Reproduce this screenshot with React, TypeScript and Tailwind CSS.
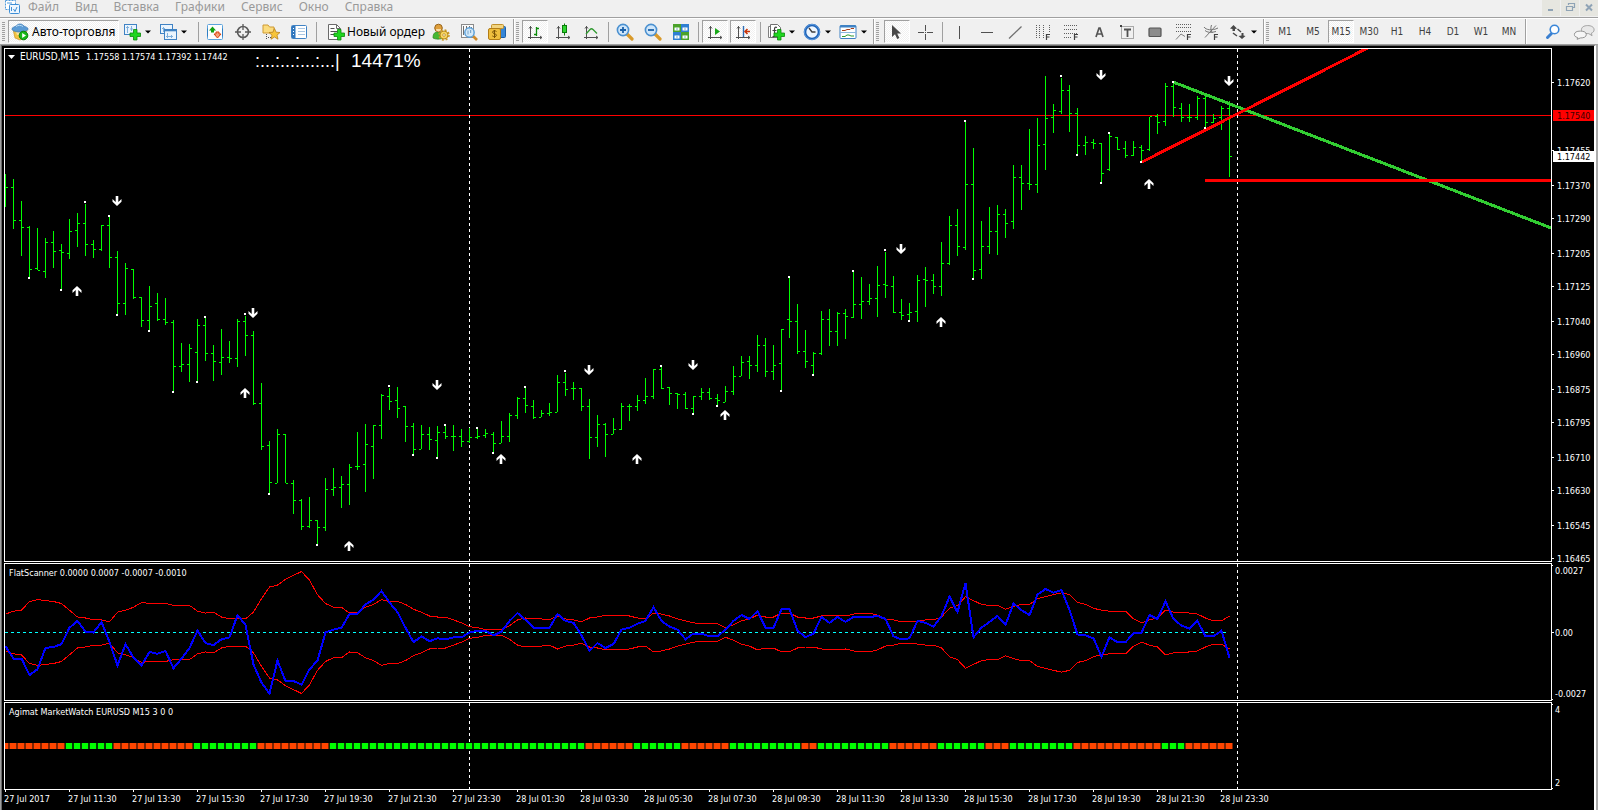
import React from "react";

/* ---------- Chart data ---------- */

const STEP = 8;

// high, low, open, close for each M15 bar, as rows measured from the window top
const BARS: number[][] = [
  [174,207,187,187],[179,229,187,220],[201,256,220,227],[226,278,227,269],[228,270,268,270],[238,278,271,242],
  [231,268,242,251],[244,289,250,252],[219,259,253,231],[213,247,230,223],[204,256,223,244],[240,258,244,249],
  [225,251,249,225],[215,268,225,257],[251,315,257,303],[263,315,303,268],[269,299,269,297],[297,327,297,320],
  [286,331,320,306],[293,321,303,319],[298,325,319,322],[320,391,322,366],[343,372,366,364],[344,382,364,348],
  [319,382,352,325],[317,361,325,353],[345,381,353,361],[329,375,362,357],[341,363,357,358],[319,367,358,321],
  [316,356,321,335],[331,405,335,403],[383,450,403,446],[441,494,445,482],[429,483,483,434],[434,483,434,483],
  [480,514,483,500],[499,530,500,526],[497,528,526,520],[520,545,520,527],[478,531,527,489],[468,496,489,487],
  [476,508,487,484],[464,505,484,467],[432,470,466,466],[424,492,464,444],[425,479,446,425],[394,439,425,395],
  [388,410,396,401],[387,418,400,408],[406,442,406,426],[423,455,426,449],[425,449,449,434],[427,450,434,439],
  [426,458,440,432],[425,439,432,436],[425,451,436,436],[429,447,436,441],[428,443,441,437],[428,439,437,436],
  [429,438,435,433],[432,453,434,443],[421,443,443,436],[413,442,436,415],[397,419,415,398],[387,413,398,405],
  [400,419,406,417],[410,417,417,413],[403,416,413,412],[375,412,412,382],[373,396,382,389],[382,400,388,388],
  [388,411,388,406],[399,459,406,437],[415,447,437,424],[423,457,424,434],[418,434,434,429],[403,430,429,406],
  [404,421,406,406],[395,411,406,400],[378,404,400,396],[369,399,396,369],[367,389,369,388],[387,405,387,393],
  [393,409,393,394],[392,409,394,408],[396,414,408,396],[388,400,396,392],[388,400,392,398],[394,405,398,400],
  [386,402,402,391],[366,395,391,376],[356,376,376,362],[356,379,361,365],[335,372,365,345],[338,377,345,371],
  [345,380,371,365],[329,391,363,329],[277,338,319,321],[304,354,321,351],[330,368,351,361],[352,375,365,353],
  [311,355,353,319],[309,346,319,331],[312,346,331,313],[309,339,313,316],[271,318,317,304],[277,319,304,301],
  [284,305,301,298],[266,317,298,285],[252,298,284,285],[276,313,286,312],[299,320,312,315],[303,320,314,312],
  [275,322,311,280],[267,307,279,280],[274,294,280,286],[242,296,286,263],[216,265,263,225],[209,256,225,246],
  [121,250,247,184],[148,279,184,270],[221,279,269,246],[207,254,246,231],[205,255,231,214],[209,238,214,223],
  [165,229,221,177],[165,210,177,183],[129,190,183,184],[118,193,184,145],[76,170,144,118],[104,133,117,110],
  [78,114,111,90],[85,132,90,113],[108,155,113,145],[136,155,145,142],[139,149,142,143],[143,182,143,173],
  [133,171,169,136],[137,150,137,149],[141,158,148,155],[141,156,155,147],[145,162,147,150],[117,151,149,116],
  [114,134,116,122],[83,126,121,86],[83,117,86,107],[103,122,108,117],[104,122,117,117],[96,120,117,98],
  [96,128,98,122],[114,123,122,118],[106,130,117,108],[101,177,108,156],
];

// [bar, row] of each fractal dot
const FRACTALS: number[][] = [
  [3,278],[7,290],[10,202],[13,216],[14,315],[18,331],[21,392],[24,382],[25,317],[30,314],[33,494],[39,545],
  [48,386],[51,455],[54,458],[55,425],[59,428],[61,453],[65,387],[70,371],[82,366],[86,414],[89,406],[97,391],
  [98,277],[101,375],[106,271],[110,250],[113,321],[120,121],[121,279],[132,76],[134,155],[137,183],[138,133],
  [142,162],[146,82],[150,128],
];

const DOWN_ARROWS: number[][] = [
  [117,201],[253,313],[437,385],[589,370],[693,365],[901,249],[1101,75],[1229,81],
];
const UP_ARROWS: number[][] = [
  [77,291],[245,393],[349,546],[501,459],[637,459],[725,415],[941,322],[1149,184],
];

// FlatScanner envelope (mirrored around zero) and its main line
const ENVELOPE = [
  19,22,23,32,34,33,32,30,23,16,15,13,13,11,21,23,26,31,30,30,30,28,28,28,22,20,21,16,14,14,14,21,35,47,49,55,59,
  63,54,39,30,26,26,20,21,26,29,34,32,32,29,24,21,17,16,16,13,10,6,5,3,3,3,7,13,15,14,14,13,17,14,13,11,15,16,18,
  18,18,17,15,14,20,19,17,14,12,10,9,9,9,5,8,12,14,18,16,16,20,20,16,15,15,17,18,18,17,19,20,20,18,14,13,11,11,12,
  13,13,16,25,28,37,33,29,28,28,24,27,29,29,35,37,39,41,39,31,29,25,23,22,22,22,14,10,13,15,23,21,21,20,19,15,12,
  12,17,
];
const OSCILLATOR = [
  -14,-27,-27,-44,-38,-16,-15,-12,5,12,1,0,11,-10,-34,-12,-26,-34,-20,-22,-19,-37,-27,-16,2,-11,-13,-7,-5,18,8,
  -33,-52,-63,-29,-50,-50,-54,-38,-29,0,3,5,19,19,29,34,43,31,21,5,-10,-4,-9,-6,-7,-5,-5,0,2,2,-3,1,12,20,13,5,5,
  5,19,12,10,-3,-19,-11,-16,-12,3,5,9,12,26,12,6,3,-7,-1,-1,-4,-4,3,12,18,14,22,5,5,24,24,2,-5,-1,16,10,16,11,16,
  16,16,17,14,-4,-7,-6,12,10,6,17,37,21,51,-5,5,11,17,8,30,23,18,39,45,41,44,23,-2,-3,-6,-25,-5,-10,-10,-1,0,18,
  14,32,14,7,4,12,-4,-4,2,-26,
];
const OSC_SCALE = 0.968;
const ZERO = 68.5;

// run lengths of the MarketWatch strip, alternating from orange to green
const TREND_RUNS = [8, 6, 10, 8, 9, 32, 6, 6, 6, 9, 2, 9, 6, 6, 3, 8, 11, 3, 6];

const PRICES: [string, number][] = [
  ["1.17620",82],["1.17455",150],["1.17370",185],["1.17290",218],["1.17205",253],["1.17125",286],["1.17040",321],
  ["1.16960",354],["1.16875",389],["1.16795",422],["1.16710",457],["1.16630",490],["1.16545",525],["1.16465",558],
];

const TIMES = [
  "27 Jul 2017","27 Jul 11:30","27 Jul 13:30","27 Jul 15:30","27 Jul 17:30","27 Jul 19:30","27 Jul 21:30",
  "27 Jul 23:30","28 Jul 01:30","28 Jul 03:30","28 Jul 05:30","28 Jul 07:30","28 Jul 09:30","28 Jul 11:30",
  "28 Jul 13:30","28 Jul 15:30","28 Jul 17:30","28 Jul 19:30","28 Jul 21:30","28 Jul 23:30",
];

/* ---------- Toolbar parts ---------- */

function Icon({ children }: { children: React.ReactNode }) {
  return (
    <svg width="18" height="18" viewBox="0 0 18 18" fill="none" className="shrink-0" aria-hidden="true">
      {children}
    </svg>
  );
}

function Grip() {
  return <span className="mx-0.5 h-5 w-[3px] shrink-0 bg-[repeating-linear-gradient(#a0a0a0_0_1px,#f0f0f0_1px_2px)]" />;
}

function Separator() {
  return <span className="mr-0.5 ml-[3px] h-5 w-px shrink-0 self-center bg-[#a0a0a0]" />;
}

function Group({ children }: { children: React.ReactNode }) {
  return (
    <div className="flex h-full items-center border-r border-[#a0a0a0] pr-0.5 shadow-[1px_0_0_#fff]">{children}</div>
  );
}

const PRESSED =
  "border border-t-[#a0a0a0] border-l-[#a0a0a0] border-r-white border-b-white bg-[repeating-conic-gradient(#fff_0_25%,#f0f0f0_0_50%)] bg-[length:2px_2px]";

function Tool({ label, pressed, children }: { label: string; pressed?: boolean; children: React.ReactNode }) {
  return (
    <button
      type="button"
      aria-label={label}
      aria-pressed={pressed}
      className={
        "mx-px flex h-[23px] w-[26px] shrink-0 items-center justify-center font-['DejaVu_Sans_Condensed','DejaVu_Sans',sans-serif] text-[10px] text-[#404040] " +
        (pressed ? PRESSED : "")
      }
    >
      {children}
    </button>
  );
}

function DropTool({ label, children }: { label: string; children: React.ReactNode }) {
  return (
    <button type="button" aria-label={label} className="flex h-[23px] w-9 shrink-0 items-center gap-1 pl-1">
      {children}
      <svg width="6" height="4" viewBox="0 0 6 4" className="shrink-0" aria-hidden="true">
        <path d="M0 0.500h6L3 3.500z" fill="#000" />
      </svg>
    </button>
  );
}

const Plus = () => (
  <path d="M10.500 6.500h3.500v3.500h3.500v3.500h-3.500v3.500h-3.500v-3.500h-3.500v-3.500h3.500z" fill="#1fd61f" stroke="#0a8a0a" strokeWidth="0.800" />
);

const Axes = () => (
  <path d="M4.500 3v13M2 14.500h14M3 5.500l1.500-2 1.500 2M14 13l2 1.500-2 1.500" stroke="#505050" />
);

const Magnifier = ({ minus }: { minus?: boolean }) => (
  <Icon>
    <path d="M11 11l5 5" stroke="#d99a2b" strokeWidth="3.200" strokeLinecap="round" />
    <circle cx="7" cy="7" r="5.600" fill="#cfe6fa" stroke="#4a90d0" strokeWidth="1.600" />
    <path d={minus ? "M4 7h6" : "M4 7h6M7 4v6"} stroke="#1b62ab" strokeWidth="1.800" />
  </Icon>
);

const F = ({ x = 12, y = 17 }: { x?: number; y?: number }) => (
  <path d={`M${x + 0.5} ${y}v-5.500h3.500M${x} ${y - 3}h3.500`} stroke="#404040" strokeWidth="1.200" />
);

function Toolbar() {
  return (
    <div className="flex h-[27px] items-center border-t border-[#a0a0a0] bg-[#f0f0f0] pt-px shadow-[inset_0_1px_0_#fff]">
      <Group>
        <Grip />
        <button
          type="button"
          className={"ml-px flex h-[23px] w-[111px] shrink-0 items-center gap-[3px] whitespace-nowrap pl-0.5 text-[12px] text-black " + PRESSED}
        >
          <Icon>
            <path d="M2 6l7 3 7-3-1 7-6 4-5-2z" fill="#f4c542" stroke="#c8922a" strokeWidth="0.700" />
            <path d="M5 9h7v3H6z" fill="#f9e2a0" />
            <path d="M1 6c0-2 3-2 4-3s2-2 4-2 3 1 4 2 4 1 4 3-4 3-8 3-8-1-8-3z" fill="#5b9bd5" stroke="#3a78b5" strokeWidth="0.700" />
            <path d="M5 3.500c2-1.500 5-1.500 7 0" stroke="#bcdcf5" />
            <circle cx="12.500" cy="12.500" r="4.300" fill="#18b818" stroke="#0b7d0b" />
            <path d="M11.200 10v5l3.800-2.500z" fill="#fff" />
          </Icon>
          Авто-торговля
        </button>
        <DropTool label="Новый график">
          <Icon>
            <rect x="1.500" y="1.500" width="12" height="10" fill="#eaf4fd" stroke="#3f82c4" />
            <path d="M4.500 3v7M3 4.500h3M8.500 3v5M7 6h3" stroke="#7fb0dc" />
            <Plus />
          </Icon>
        </DropTool>
        <DropTool label="Профили">
          <Icon>
            <rect x="1.500" y="1.500" width="12" height="9" fill="#eaf4fd" stroke="#3f82c4" />
            <path d="M4.500 4v5M3 5.500h3" stroke="#7fb0dc" />
            <rect x="5.500" y="6.500" width="12" height="10" fill="#eaf4fd" stroke="#3f82c4" />
            <path d="M5 7.500h13" stroke="#3f82c4" strokeWidth="1.600" />
            <path d="M8.500 10v5M7 13.500h7M12.500 12v3" stroke="#7fb0dc" />
          </Icon>
        </DropTool>
        <span className="w-1" />
        <Separator />
        <Tool label="Обзор рынка">
          <Icon>
            <rect x="1.500" y="1.500" width="15" height="15" rx="1" fill="#fdfdfd" stroke="#5ba3dc" />
            <path d="M1.500 5.500v8M16.500 5.500v8" stroke="#2f7fc4" />
            <path d="M6.500 3.500L10 7.500H8v2H5v-2H3z" fill="#12a012" />
            <path d="M11.500 15L15 11h-2V9h-3v2H8z" fill="#f5a27a" stroke="#d8400c" />
          </Icon>
        </Tool>
        <Tool label="Окно данных">
          <Icon>
            <circle cx="9" cy="9" r="5.500" stroke="#5a5a5a" strokeWidth="1.600" />
            <path d="M9 1v6M9 11v6M1 9h6M11 9h6" stroke="#5a5a5a" strokeWidth="1.300" />
          </Icon>
        </Tool>
        <Tool label="Навигатор">
          <Icon>
            <path d="M1 10V2h5l1.500 2H12v6z" fill="#fbdc7e" stroke="#cf9a35" />
            <path d="M4.500 11v6M6 14.500h3" stroke="#505050" strokeDasharray="1 1" />
            <path d="M12.500 5.500l1.600 3.700 3.900.3-3 2.700 1 4-3.500-2.200L9 16.200l1-4-3-2.700 3.900-.3z" fill="#f7c53a" stroke="#b7821d" strokeWidth="0.800" />
          </Icon>
        </Tool>
        <Tool label="Терминал">
          <Icon>
            <rect x="1.500" y="2.500" width="15" height="13" rx="1" fill="#fff" stroke="#3f82c4" />
            <rect x="2" y="3" width="3.500" height="12" fill="#2f76bd" />
            <path d="M3 5.500h1M3 8.500h1M3 11.500h1" stroke="#fff" />
            <path d="M8 5.500h7M8 8.500h7M8 11.500h7" stroke="#a9c6e2" />
          </Icon>
        </Tool>
        <Separator />
        <button type="button" className="ml-1.5 flex h-[23px] w-[102px] shrink-0 items-center gap-0.5 whitespace-nowrap pl-0.5 text-[12px] text-black">
          <Icon>
            <path d="M1.500 1.500h8l4 4v11h-12z" fill="#fdfdfd" stroke="#6a6a6a" />
            <path d="M9.500 1.500v4h4" stroke="#6a6a6a" />
            <path d="M3.500 5.500h4M3.500 8.500h7M3.500 11.500h5" stroke="#505050" />
            <Plus />
          </Icon>
          Новый ордер
        </button>
        <Tool label="MetaEditor">
          <Icon>
            <path d="M1 15c0-5 2-6 5-6s5 1 5 6c-2 1.500-8 1.500-10 0z" fill="#46b833" stroke="#2d8a20" strokeWidth="0.700" />
            <circle cx="6.500" cy="5" r="3.800" fill="#e0a03c" stroke="#99651a" />
            <path d="M4 6a2.500 2.500 0 0 0 5 0" fill="#f9dca8" />
            <circle cx="12" cy="12" r="4" fill="#f7d560" stroke="#b88a1c" />
            <circle cx="12" cy="12" r="5" stroke="#c99a28" strokeWidth="1.500" strokeDasharray="2 1.930" />
            <circle cx="12" cy="12" r="1.300" fill="#fff" stroke="#b88a1c" strokeWidth="0.800" />
          </Icon>
        </Tool>
        <Tool label="Тестер стратегий">
          <Icon>
            <rect x="1.500" y="1.500" width="12" height="13" fill="#fbfbfb" stroke="#8a8a8a" />
            <path d="M3.500 3v9M6.500 3v5M9.500 3v4M11.500 4v6" stroke="#707070" />
            <path d="M13 13l4 4" stroke="#d08a2a" strokeWidth="2.600" />
            <circle cx="9.500" cy="9.500" r="4.700" fill="#cfe8fa" fillOpacity="0.900" stroke="#5a9fd8" strokeWidth="1.400" />
            <path d="M8 7.500v4M10.500 7v3" stroke="#7aa6cc" />
          </Icon>
        </Tool>
        <Tool label="Маркет">
          <Icon>
            <rect x="5.500" y="3.500" width="12" height="11" rx="1" fill="#3585d6" stroke="#1b5ea6" />
            <rect x="3.500" y="1.500" width="12" height="4" rx="1" fill="#f2d480" stroke="#c0902c" />
            <rect x="0.500" y="5.500" width="12" height="11" rx="1.500" fill="#efbe3e" stroke="#b37d16" />
            <path d="M8.500 8.500c-1-1-4-1-4 .7s4 1.300 4 3-3 1.800-4.200.7M6.500 7v8" stroke="#7a5206" />
          </Icon>
        </Tool>
      </Group>
      <Group>
        <Grip />
        <Tool label="Бары" pressed>
          <Icon>
            <Axes />
            <path d="M10.500 4v9M8 11.500h2.500M10.500 5.500H13" stroke="#0c8c0c" strokeWidth="1.300" />
          </Icon>
        </Tool>
        <Tool label="Свечи">
          <Icon>
            <Axes />
            <path d="M10.500 0.500v12" stroke="#0c7c0c" />
            <rect x="8.500" y="2.500" width="4" height="7" fill="#2fd52f" stroke="#0c7c0c" />
          </Icon>
        </Tool>
        <Tool label="Линия">
          <Icon>
            <Axes />
            <path d="M4 11l4-4.500c1-1 2-1 3 0l4 4" stroke="#2f9a2f" strokeWidth="1.300" />
          </Icon>
        </Tool>
        <Separator />
        <Tool label="Приблизить"><Magnifier /></Tool>
        <Tool label="Отдалить"><Magnifier minus /></Tool>
        <Tool label="Упорядочить окна">
          <Icon>
            <rect x="1" y="1" width="16" height="16" fill="#fff" />
            <rect x="1" y="1" width="8" height="8" fill="#4ba22a" />
            <rect x="9" y="1" width="8" height="8" fill="#2f7fd2" />
            <rect x="1" y="9" width="8" height="8" fill="#2f7fd2" />
            <rect x="9" y="9" width="8" height="8" fill="#4ba22a" />
            <path d="M2.500 6h5M10.500 6h5M2.500 14h5M10.500 14h5" stroke="#fff" strokeWidth="3" />
            <path d="M4 6h2M12 6h2M4 14h2M12 14h2" stroke="#7fb0c0" />
          </Icon>
        </Tool>
        <Separator />
        <Tool label="Автопрокрутка" pressed>
          <Icon>
            <Axes />
            <path d="M9 5v7l5-3.500z" fill="#18a818" />
          </Icon>
        </Tool>
        <Tool label="Сдвиг графика" pressed>
          <Icon>
            <Axes />
            <path d="M9.500 3v11" stroke="#2f6db5" strokeWidth="1.400" />
            <path d="M11 8.500h5M13.500 6l-2.500 2.500 2.500 2.500" stroke="#c8360c" strokeWidth="1.500" />
          </Icon>
        </Tool>
        <Separator />
        <DropTool label="Индикаторы">
          <Icon>
            <path d="M1.500 3.500h9v11h-9z" fill="#fff" stroke="#808080" />
            <path d="M3.500 1.500h7l3 3v10h-10z" fill="#fff" stroke="#707070" />
            <path d="M10 4.500c-2-.8-2.500 0-2.500 2V12c0 1.500-1 2-2 1.500M5.500 7.500h4" stroke="#404040" strokeWidth="1.200" />
            <Plus />
          </Icon>
        </DropTool>
        <DropTool label="Периоды">
          <Icon>
            <circle cx="9" cy="9" r="7" fill="#eef6fe" stroke="#1e63b8" strokeWidth="2.600" />
            <circle cx="9" cy="9" r="7.600" stroke="#6ba6e4" strokeWidth="0.800" />
            <path d="M6 5l3 4h3.500" stroke="#404040" strokeWidth="1.300" />
          </Icon>
        </DropTool>
        <DropTool label="Шаблоны">
          <Icon>
            <rect x="1" y="2.500" width="16" height="13" rx="1" fill="#fff" stroke="#3f82c4" />
            <path d="M1 3.500h16" stroke="#3f82c4" strokeWidth="2" />
            <path d="M1 9.500h16" stroke="#8ab6de" />
            <path d="M3 7.500h3l2-1h3l1-1h3" stroke="#a8401c" />
            <path d="M3 13.500h3l2-1.500h2l2 1h3" stroke="#2f9a2f" />
          </Icon>
        </DropTool>
      </Group>
      <Group>
        <Grip />
        <span className="w-0.5" />
        <Tool label="Курсор" pressed>
          <Icon>
            <path d="M4 2v12l3-2.800 2.200 4.800 2.200-1-2.200-4.600H13z" fill="#484848" />
          </Icon>
        </Tool>
        <Tool label="Перекрестие">
          <Icon>
            <path d="M9.500 2v6M9.500 11v6M2 9.500h6M11 9.500h6M9 9.500h1" stroke="#505050" />
          </Icon>
        </Tool>
        <Separator />
        <Tool label="Вертикальная линия"><Icon><path d="M9.500 3v13" stroke="#505050" /></Icon></Tool>
        <Tool label="Горизонтальная линия"><Icon><path d="M3 9.500h12" stroke="#505050" /></Icon></Tool>
        <Tool label="Трендовая линия"><Icon><path d="M3 15.500L15.500 3.500" stroke="#707070" strokeWidth="1.300" /></Icon></Tool>
        <Tool label="Временные зоны Фибоначчи">
          <Icon>
            <path d="M2.500 2v13M5.500 2v13M9.500 2v13M15.500 2v8" stroke="#606060" strokeDasharray="1 1" />
            <F x={12} />
          </Icon>
        </Tool>
        <Tool label="Уровни Фибоначчи">
          <Icon>
            <path d="M2 2.500h14M2 6.500h14M2 10.500h14M2 14.500h8" stroke="#606060" strokeDasharray="1 1" />
            <F x={12} />
          </Icon>
        </Tool>
        <Tool label="Текст">
          <Icon>
            <path d="M6 14L9 5h1L13 14M7 11h5" stroke="#555" strokeWidth="1.700" />
          </Icon>
        </Tool>
        <Tool label="Текстовая метка">
          <Icon>
            <rect x="3.500" y="3.500" width="12" height="12" stroke="#606060" strokeDasharray="1 1" />
            <path d="M6 6.500h7M9.500 6.500V14" stroke="#505050" strokeWidth="1.800" />
            <rect x="2" y="2" width="2" height="2" fill="#404040" />
          </Icon>
        </Tool>
        <Tool label="Прямоугольник">
          <Icon>
            <rect x="3" y="5" width="12" height="8.500" rx="1" fill="#8c8c8c" stroke="#555" strokeWidth="1.200" />
          </Icon>
        </Tool>
        <Tool label="Расширение Фибоначчи">
          <Icon>
            <path d="M2 1.500h15M2 4.500h15M2 8.500h15" stroke="#606060" strokeDasharray="1 1" />
            <path d="M2 16.500l5-5.500 4 2.500" stroke="#808080" />
            <F x={13} />
          </Icon>
        </Tool>
        <Tool label="Дуги Фибоначчи">
          <Icon>
            <path d="M3 14.500L14 2.500M2 4c2 3 8 4 14 1M3 7.500c2 2 6 2.500 11 1M9.500 2c-1 3-1 5 1 8" stroke="#757575" />
            <F x={12} />
          </Icon>
        </Tool>
        <DropTool label="Стрелки">
          <Icon>
            <path d="M4.500 2l3.500 3.500-2 .5v2H3.500V6L1 5.500zM12.500 10h2v2.500l2 .5-3.500 3-3.500-3 3-.5z" fill="#484848" />
            <path d="M4 10l4 3M8.500 6L12 9" stroke="#484848" strokeWidth="1.500" />
          </Icon>
        </DropTool>
      </Group>
      <Group>
        <Grip />
        {["M1", "M5", "M15", "M30", "H1", "H4", "D1", "W1", "MN"].map((tf) => (
          <Tool key={tf} label={tf} pressed={tf === "M15"}>{tf}</Tool>
        ))}
      </Group>
      <div className="mr-[3px] ml-auto flex items-center gap-3">
        <button type="button" aria-label="Поиск">
          <svg width="18" height="18" viewBox="0 0 18 18" fill="none" aria-hidden="true">
            <path d="M4.500 14.500l4-4" stroke="#3a7fd0" strokeWidth="3" strokeLinecap="round" />
            <circle cx="11.500" cy="6.500" r="4.300" fill="#fff" stroke="#3a86d8" strokeWidth="1.600" />
          </svg>
        </button>
        <button type="button" aria-label="Чат">
          <svg width="22" height="18" viewBox="0 0 24 18" fill="none" aria-hidden="true">
            <path d="M16 2c4 0 7 1.600 7 4.500 0 2-1 3-3 3.800l.8 2.700-3.600-2.200c-5 0-8-1.500-8-4.300S12 2 16 2z" fill="#e8e8e8" stroke="#9a9a9a" />
            <path d="M8 8c4 0 6.500 1.300 6.500 3.800S12 15.500 8 15.500L4.500 17l.5-2c-2.500-.6-3.500-1.700-3.500-3.200C1.500 9.300 4 8 8 8z" fill="#f6f6f6" stroke="#8a8a8a" />
          </svg>
        </button>
      </div>
    </div>
  );
}

function MenuBar() {
  const item = "text-[12px] leading-[14px] text-[#999]";
  return (
    <nav className="flex h-[17px] items-start bg-[#f0f0f0] pl-[5px]">
      <svg width="15" height="14" viewBox="0 0 15 14" fill="none" className="mr-2" aria-hidden="true">
        <rect x="0.500" y="0.500" width="10" height="9" fill="#fff" stroke="#4e9bdc" strokeDasharray="2 1" />
        <rect x="4.500" y="4.500" width="10" height="9" rx="1" fill="#eef7ff" stroke="#3f8fd6" />
        <path d="M6.500 7v4M8.500 9l1.500 2.500L12 7" stroke="#3f8fd6" />
        <path d="M2 3h5" stroke="#4e9bdc" />
      </svg>
      <div className="flex gap-4">
        {["Файл", "Вид", "Вставка", "Графики", "Сервис", "Окно", "Справка"].map((m) => (
          <button key={m} type="button" className={item}>{m}</button>
        ))}
      </div>
      <div className="ml-auto flex gap-px">
        {[
          ["Свернуть", "M6 10h5", "2"],
          ["Развернуть", "M7.500 5V3.500h6v4H12M5.500 6.500h6v4h-6z", "1.2"],
          ["Закрыть", "M6 4.500l6 6M12 4.500l-6 6", "2"],
        ].map(([label, d, w]) => (
          <button key={label} type="button" aria-label={label} className="h-4 w-[18px] bg-[#e6e6e0]">
            <svg width="18" height="16" viewBox="0 0 18 16" fill="none" aria-hidden="true">
              <path d={d} stroke="#8fa3b5" strokeWidth={w} />
            </svg>
          </button>
        ))}
      </div>
    </nav>
  );
}

/* ---------- Chart panes ---------- */

const TEXT = "fill-white text-[9px]";

const DaySeparators = () => (
  <g stroke="#fff" strokeDasharray="3 3" shapeRendering="crispEdges">
    <line x1="464.500" x2="464.500" y1="0" y2="100%" />
    <line x1="1232.500" x2="1232.500" y1="0" y2="100%" />
  </g>
);

function Pane({ children, axis, className }: { children: React.ReactNode; axis: React.ReactNode; className: string }) {
  return (
    <div className={"flex " + className}>
      <div className="min-w-0 flex-1 overflow-hidden border border-white">
        <svg className="block h-full w-full">{children}</svg>
      </div>
      <svg className="block h-full w-[42px] shrink-0 overflow-visible">{axis}</svg>
    </div>
  );
}

const TOP = 49;
const barPath = BARS.map(([h, l, o, c], i) => {
  const x = i * STEP;
  const open = i === 0 ? "" : `M${x - 2} ${o - TOP + 0.5}h2`;
  return `M${x + 0.5} ${h - TOP}V${l - TOP}${open}M${x + 1} ${c - TOP + 0.5}h2`;
}).join("");

function PricePane() {
  return (
    <Pane
      className="min-h-[514px] flex-1"
      axis={
        <>
          {PRICES.map(([p, y]) => (
            <g key={p}>
              <rect x="0" y={y - 48} width="2" height="1" fill="#fff" />
              <text x="5" y={y - 44} className={TEXT}>{p}</text>
            </g>
          ))}
          <rect x="1" y="62" width="41" height="11" fill="#f00" />
          <text x="5" y="71" className="fill-[#3a0000] text-[9px]">1.17540</text>
          <rect x="1" y="103" width="41" height="11" fill="#fff" />
          <text x="5" y="112" className="fill-black text-[9px]">1.17442</text>
        </>
      }
    >
      <rect x="0" y="66" width="100%" height="1" fill="#f00" />
      <DaySeparators />
      <path d={barPath} stroke="#0f0" shapeRendering="crispEdges" />
      <g shapeRendering="crispEdges">
        <line x1="1168" y1="33" x2="1768" y2="264.600" stroke="#32cd32" strokeWidth="3" />
        <line x1="1137" y1="113" x2="1437" y2="-38.500" stroke="#f00" strokeWidth="3" />
        <line x1="1200" y1="131.500" x2="100%" y2="131.500" stroke="#f00" strokeWidth="3" />
      </g>
      {FRACTALS.map(([i, y]) => (
        <rect key={i + "-" + y} x={i * STEP - 1} y={y - TOP - 1} width="2" height="2" fill="#fff" />
      ))}
      {UP_ARROWS.map(([x, y]) => (
        <path key={x} transform={`translate(${x - 5} ${y - TOP})`} d="M0-5L4.500-0.800V2L1.300-1V5h-2.600V-1L-4.500 2V-0.800z" fill="#fff" />
      ))}
      {DOWN_ARROWS.map(([x, y]) => (
        <path key={x} transform={`translate(${x - 5} ${y - TOP})`} d="M0 5L4.500 0.800V-2L1.300 1V-5h-2.600V1L-4.500-2V0.800z" fill="#fff" />
      ))}
      <path d="M3 6h7l-3.500 4z" fill="#fff" />
      <text x="15" y="11" className="fill-white text-[10px]">EURUSD,M15</text>
      <text x="81" y="11" className={TEXT}>1.17558 1.17574 1.17392 1.17442</text>
      <text x="250" y="18" className="fill-white font-['Liberation_Sans',sans-serif] text-[18px]">:...:...:...:...|</text>
      <text x="346" y="18" className="fill-white font-['Liberation_Sans',sans-serif] text-[19px]">14471%</text>
    </Pane>
  );
}

const line = (values: number[], sign: number) =>
  values.map((v, i) => `${i * STEP + 0.5},${(ZERO - sign * v * OSC_SCALE).toFixed(1)}`).join(" ");

function ScannerPane() {
  return (
    <Pane
      className="h-[138px]"
      axis={
        <>
          <path d="M0 2.500h1M0 69.500h2M0 136.500h1" stroke="#fff" shapeRendering="crispEdges" />
          <text x="3" y="11" className={TEXT}>0.0027</text>
          <text x="3" y="73" className={TEXT}>0.00</text>
          <text x="3" y="134" className={TEXT}>-0.0027</text>
        </>
      }
    >
      <DaySeparators />
      <g fill="none" shapeRendering="crispEdges">
        <path d="M0 68.500H1222" stroke="#0ff" strokeDasharray="3 3" />
        <polyline points={line(ENVELOPE, 1)} stroke="#f00" />
        <polyline points={line(ENVELOPE, -1)} stroke="#f00" />
        <polyline points={line(OSCILLATOR, 1)} stroke="#00f" strokeWidth="2" />
      </g>
      <text x="4" y="12" className={TEXT}>FlatScanner 0.0000 0.0007 -0.0007 -0.0010</text>
    </Pane>
  );
}

function WatchPane() {
  const cells = TREND_RUNS.flatMap((n, r) => Array.from({ length: n }, () => r % 2 === 1));
  return (
    <Pane
      className="h-[88px]"
      axis={
        <>
          <path d="M0 2.500h1M0 86.500h1" stroke="#fff" shapeRendering="crispEdges" />
          <text x="3" y="11" className={TEXT}>4</text>
          <text x="3" y="84" className={TEXT}>2</text>
        </>
      }
    >
      <DaySeparators />
      {cells.map((up, i) => (
        <g key={i}>
          <rect x={i * STEP - 4} y="40" width="8" height="6" fill={up ? "#003c00" : "#802200"} />
          <rect x={i * STEP - 3} y="40" width="6" height="6" fill={up ? "#0f0" : "#ff4500"} />
        </g>
      ))}
      <text x="4" y="12" className={TEXT}>Agimat MarketWatch EURUSD M15 3 0 0</text>
    </Pane>
  );
}

function TimeAxis() {
  return (
    <svg className="block h-5 w-full">
      {TIMES.map((t, k) => (
        <g key={t}>
          <rect x={k * 64 + 1} y="0" width="1" height="2" fill="#fff" />
          <text x={k * 64} y="12" className={TEXT}>{t}</text>
        </g>
      ))}
    </svg>
  );
}

export default function App() {
  return (
    <div className="flex min-h-screen flex-col bg-[#f0f0f0] font-['Noto_Sans',sans-serif]">
      <MenuBar />
      <Toolbar />
      <main className="flex flex-1 border-t border-l border-[#a0a0a0] border-r-2 border-r-[#ababab] bg-black">
        <div className="flex min-w-0 flex-1 flex-col gap-px border-t border-l border-[#696969] border-r-2 border-r-white pt-0.5 pl-0.5 font-['DejaVu_Sans_Condensed','DejaVu_Sans',sans-serif]">
          <PricePane />
          <ScannerPane />
          <div>
            <WatchPane />
            <TimeAxis />
          </div>
        </div>
      </main>
    </div>
  );
}
